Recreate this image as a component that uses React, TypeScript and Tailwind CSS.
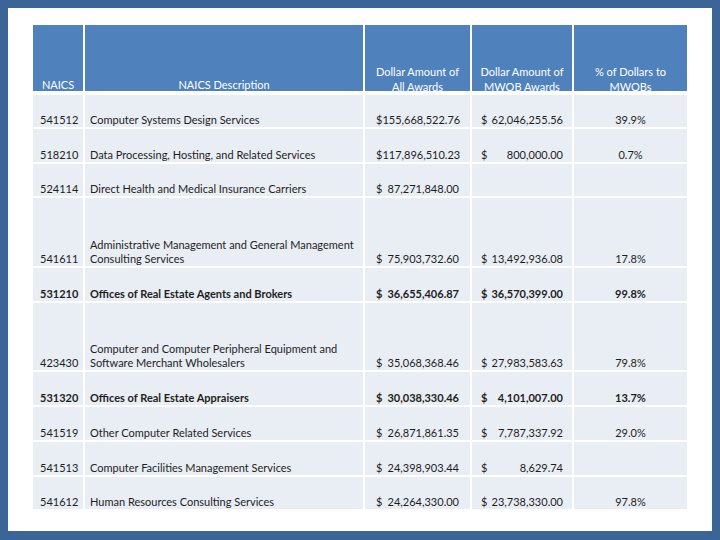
const rows = [
  { code: "541512", desc: ["Computer Systems Design Services"], all: ["$", "155,668,522.76"], mwob: ["$", "62,046,255.56"], pct: "39.9%", h: "h-[32px]" },
  { code: "518210", desc: ["Data Processing, Hosting, and Related Services"], all: ["$", "117,896,510.23"], mwob: ["$", "800,000.00"], pct: "0.7%", h: "h-[33px]" },
  { code: "524114", desc: ["Direct Health and Medical Insurance Carriers"], all: ["$", "87,271,848.00"], mwob: null, pct: "", h: "h-[32px]" },
  { code: "541611", desc: ["Administrative Management and General Management", "Consulting Services"], all: ["$", "75,903,732.60"], mwob: ["$", "13,492,936.08"], pct: "17.8%", h: "h-[68px]" },
  { code: "531210", desc: ["Offices of Real Estate Agents and Brokers"], all: ["$", "36,655,406.87"], mwob: ["$", "36,570,399.00"], pct: "99.8%", h: "h-[33px]", bold: true },
  { code: "423430", desc: ["Computer and Computer Peripheral Equipment and", "Software Merchant Wholesalers"], all: ["$", "35,068,368.46"], mwob: ["$", "27,983,583.63"], pct: "79.8%", h: "h-[67px]" },
  { code: "531320", desc: ["Offices of Real Estate Appraisers"], all: ["$", "30,038,330.46"], mwob: ["$", "4,101,007.00"], pct: "13.7%", h: "h-[33px]", bold: true },
  { code: "541519", desc: ["Other Computer Related Services"], all: ["$", "26,871,861.35"], mwob: ["$", "7,787,337.92"], pct: "29.0%", h: "h-[33px]" },
  { code: "541513", desc: ["Computer Facilities Management Services"], all: ["$", "24,398,903.44"], mwob: ["$", "8,629.74"], pct: "", h: "h-[33px]" },
  { code: "541612", desc: ["Human Resources Consulting Services"], all: ["$", "24,264,330.00"], mwob: ["$", "23,738,330.00"], pct: "97.8%", h: "h-[32px]" },
];

const cols = "grid grid-cols-[50px_278px_105px_100px_113px] gap-x-[2px]";

export default function App() {
  return (
    <div
      className="w-[720px] h-[540px] bg-[#3b6596] pt-[8px] pl-[8px] pr-[8px] pb-[9px]"
      style={{ fontFamily: "Lato, 'Liberation Sans', sans-serif" }}
    >
      <div className="h-full bg-white pt-[17px] pl-[25px]">
        {/* header */}
        <div className={`${cols} h-[66px] text-white text-[11px] leading-[14px]`}>
          <div className="bg-[#4f81bd] flex items-end justify-center overflow-hidden">
            <span className="-mb-[1px]">NAICS</span>
          </div>
          <div className="bg-[#4f81bd] flex items-end justify-center overflow-hidden">
            <span className="-mb-[1px]">NAICS Description</span>
          </div>
          <div className="bg-[#4f81bd] flex items-end justify-center overflow-hidden text-center">
            <span className="-mb-[3px] leading-[15px]">Dollar Amount of<br />All Awards</span>
          </div>
          <div className="bg-[#4f81bd] flex items-end justify-center overflow-hidden text-center">
            <span className="-mb-[3px] leading-[15px]">Dollar Amount of<br />MWOB Awards</span>
          </div>
          <div className="bg-[#4f81bd] flex items-end justify-center overflow-hidden text-center">
            <span className="-mb-[3px] leading-[15px]">% of Dollars to<br />MWOBs</span>
          </div>
        </div>

        {/* body */}
        <div className="mt-[4px] flex flex-col gap-y-[2px] text-[11px] leading-[14px] text-[#1e1e1e]">
          {rows.map((r) => (
            <div key={r.code} className={`${cols} ${r.h} ${r.bold ? "font-bold" : ""}`}>
              <div className="bg-[#e9edf4] flex items-end pl-[7px]">{r.code}</div>
              <div className="bg-[#e9edf4] flex flex-col justify-end pl-[5px]">
                {r.desc.map((d) => (
                  <span key={d}>{d}</span>
                ))}
              </div>
              <div className="bg-[#e9edf4] flex items-end justify-between px-[11px]">
                <span>{r.all[0]}</span>
                <span>{r.all[1]}</span>
              </div>
              <div className="bg-[#e9edf4] flex items-end justify-between px-[9px]">
                {r.mwob && (
                  <>
                    <span>{r.mwob[0]}</span>
                    <span>{r.mwob[1]}</span>
                  </>
                )}
              </div>
              <div className="bg-[#e9edf4] flex items-end justify-center">{r.pct}</div>
            </div>
          ))}
        </div>
      </div>
    </div>
  );
}
